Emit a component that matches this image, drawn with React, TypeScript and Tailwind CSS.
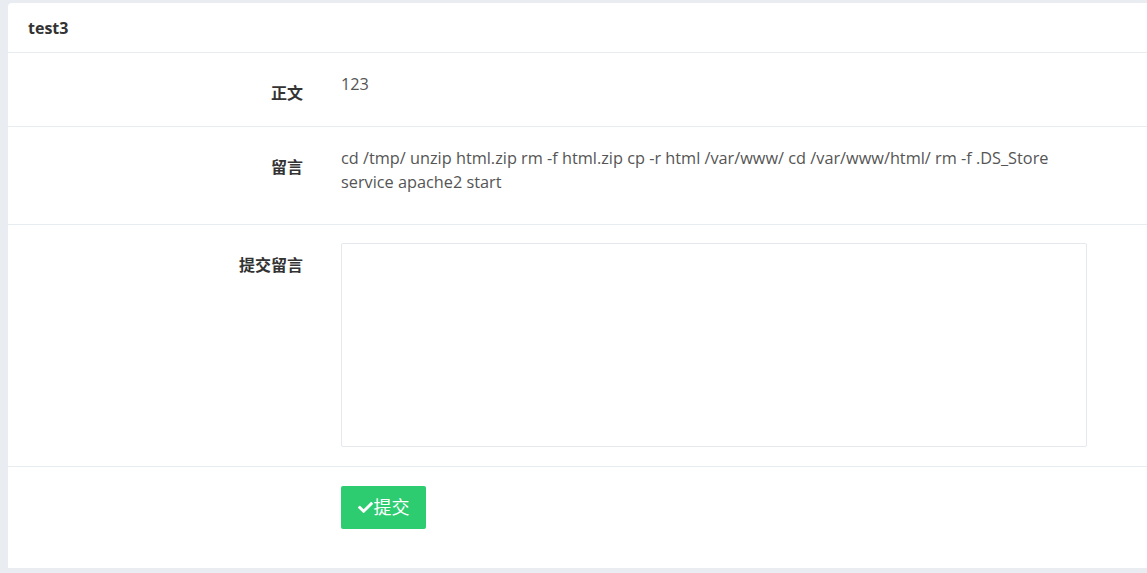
import { FaCheck } from 'react-icons/fa';

const font = { fontFamily: '"Open Sans", "Noto Sans CJK SC", sans-serif' };

export default function App() {
  return (
    <div className="h-[573px] w-[1147px] overflow-hidden bg-[#e9edf1] pt-[3px] pl-2" style={font}>
      <div className="h-[565px] w-[1160px] rounded-tl-[4px] bg-white text-[16.3px] text-[#555]">
        {/* header */}
        <div className="flex h-[50px] items-center border-b border-[#e7ecf1] pl-5 text-[16px] font-bold text-[#333]">
          test3
        </div>

        {/* 正文 */}
        <div className="flex border-b border-[#e7ecf1] pt-[20px] pb-[21px]">
          <div className="w-[295px] pt-[8px] text-right text-[16px] leading-6 font-bold text-[#333]">正文</div>
          <div className="ml-[38px] -mt-[1px] leading-6">123</div>
        </div>

        {/* 留言 */}
        <div className="flex border-b border-[#e7ecf1] pt-[19px] pb-[30px]">
          <div className="w-[295px] pt-[9px] text-right text-[16px] leading-6 font-bold text-[#333]">留言</div>
          <div className="ml-[38px] w-[730px] leading-6">
            cd /tmp/ unzip html.zip rm -f html.zip cp -r html /var/www/ cd /var/www/html/ rm -f .DS_Store service apache2 start
          </div>
        </div>

        {/* 提交留言 */}
        <div className="flex border-b border-[#e7ecf1] pt-[18px] pb-[19px]">
          <div className="w-[295px] pt-[10px] text-right text-[16px] leading-6 font-bold text-[#333]">提交留言</div>
          <textarea className="ml-[38px] h-[204px] w-[746px] resize-none rounded-[2px] border border-[#e5e9ef] p-2 outline-none" />
        </div>

        {/* submit */}
        <div className="flex pt-[19px]">
          <div className="w-[295px]" />
          <button className="ml-[38px] flex h-[43px] w-[85px] items-center justify-center gap-[1px] rounded-[2px] bg-[#2ecc71] text-[18px] text-white">
            <FaCheck size={15} />
            <span>提交</span>
          </button>
        </div>
      </div>
    </div>
  );
}
